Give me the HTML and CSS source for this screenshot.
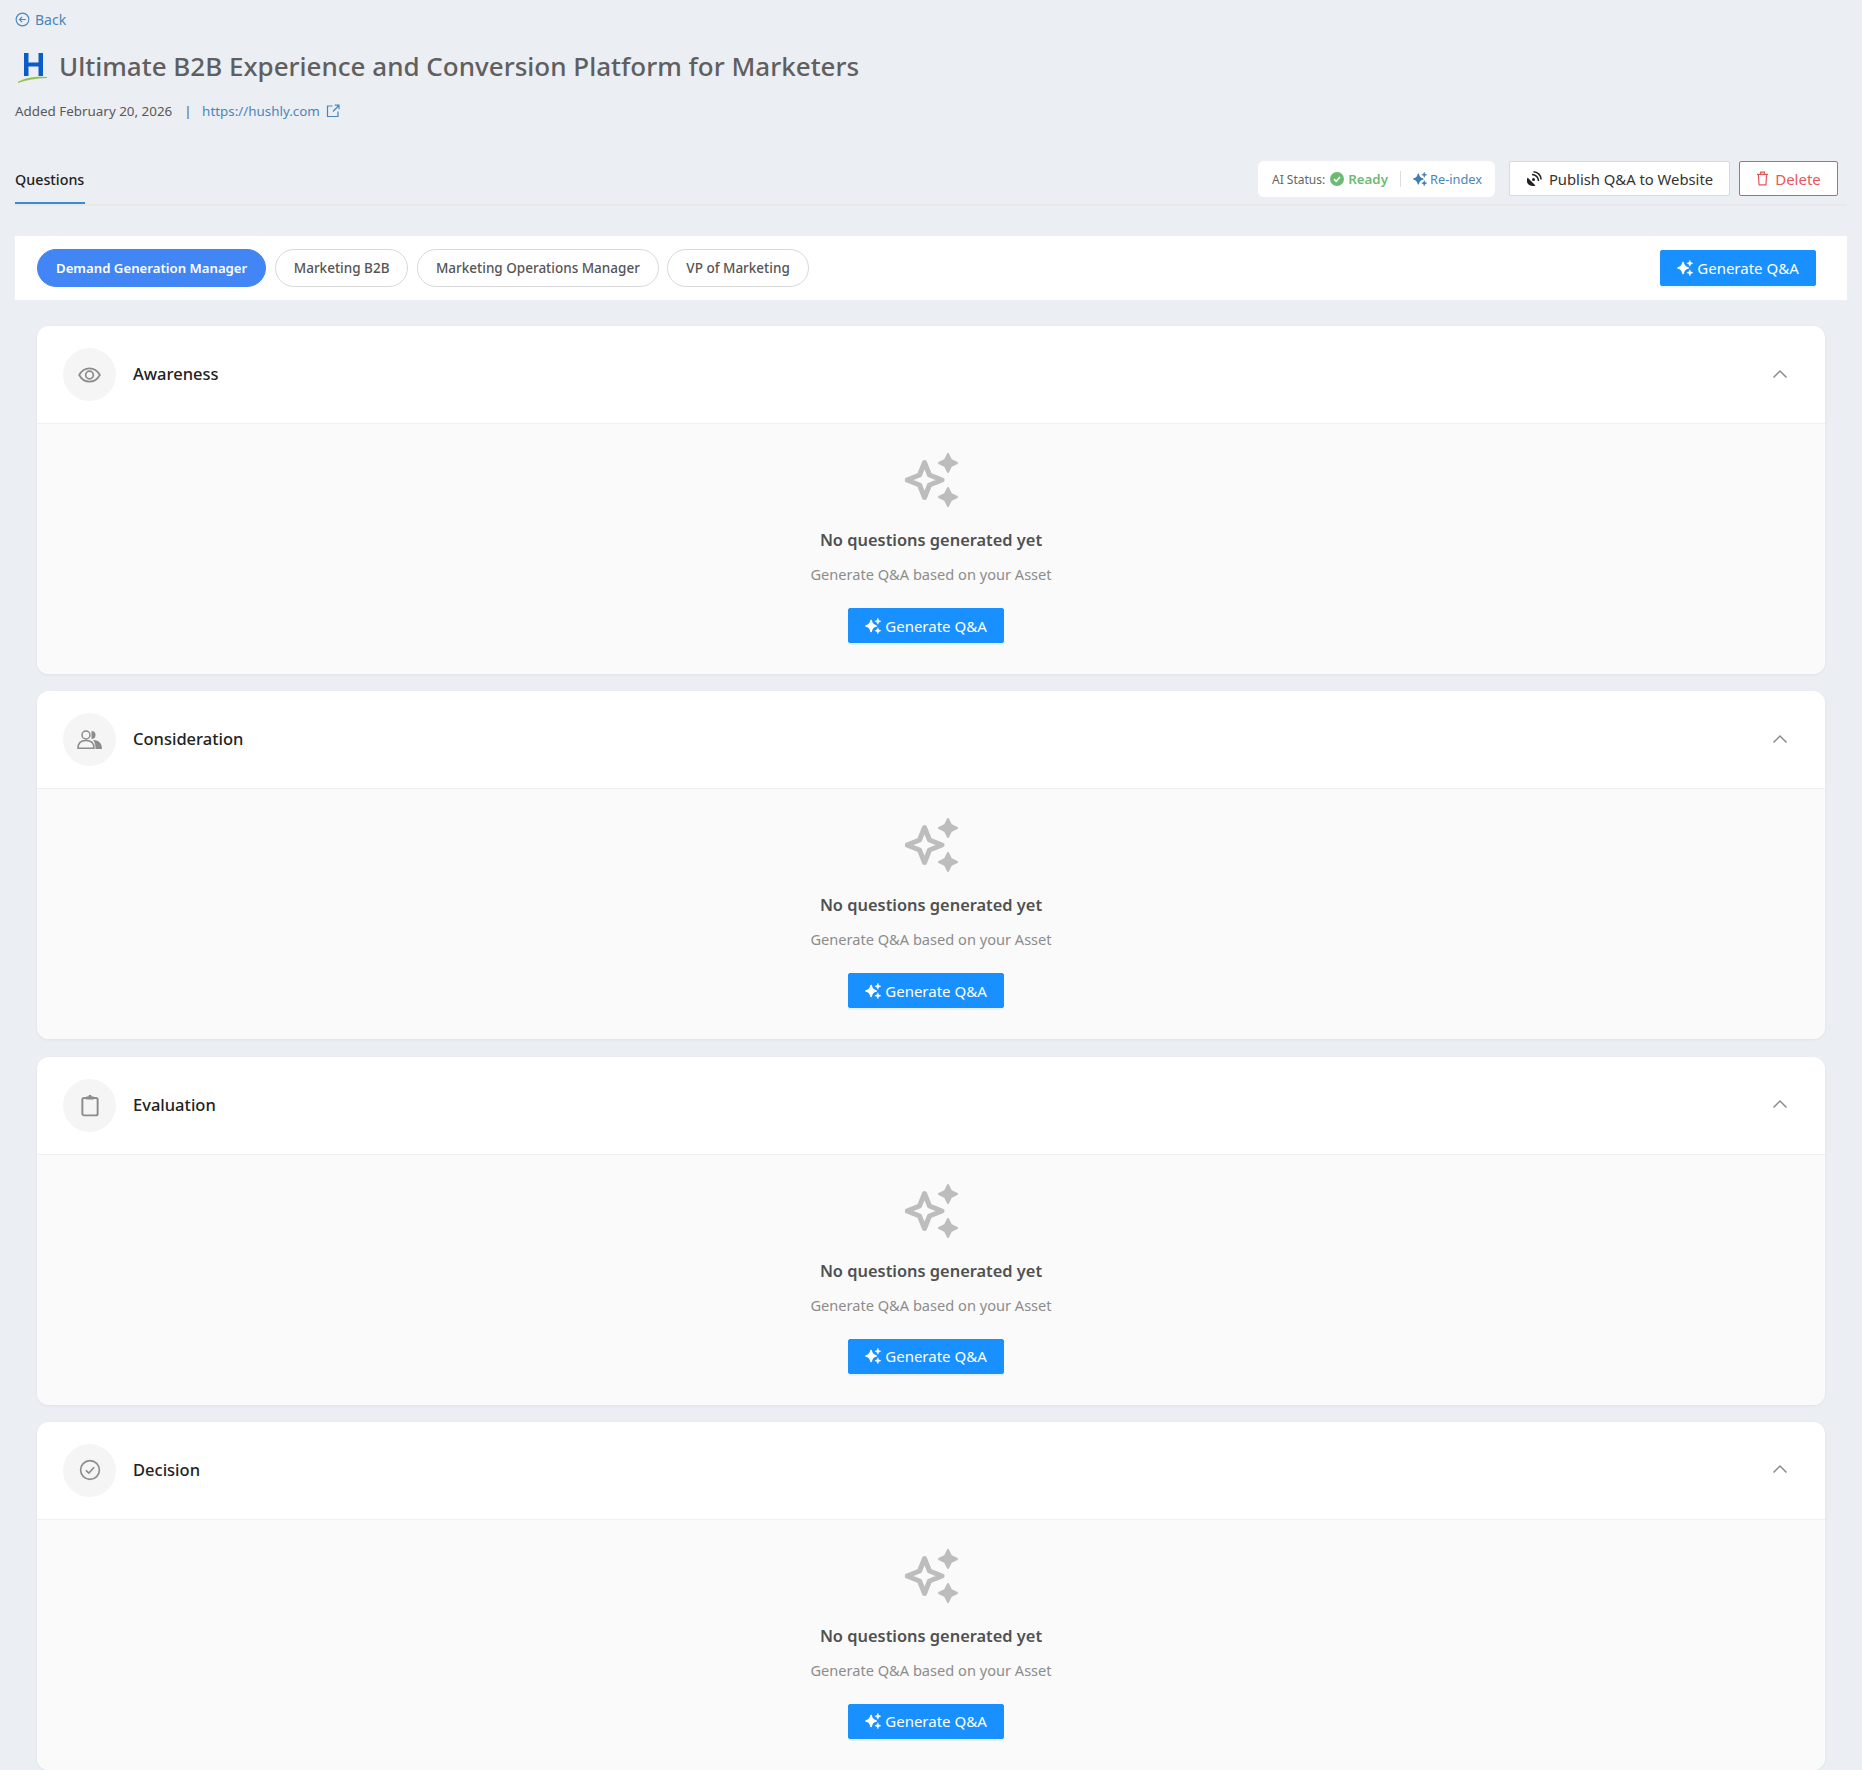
FILE: index.html
```html
<!DOCTYPE html>
<html lang="en">
<head>
<meta charset="utf-8">
<title>Questions</title>
<link rel="stylesheet" href="styles.css">
</head>
<body>
<svg class="defs" width="0" height="0" aria-hidden="true">
  <symbol id="spark-mini" viewBox="0 0 53 54">
    <path d="M20 9C21.500 19 26 24.500 37 27C26 29.500 21.500 35 20 45C18.500 35 14 29.500 3 27C14 24.500 18.500 19 20 9Z" stroke="currentColor" stroke-width="6" stroke-linejoin="round"/>
    <path d="M43 1C44 7 47 10 53 11C47 12 44 15 43 21C42 15 39 12 33 11C39 10 42 7 43 1Z" stroke="currentColor" stroke-width="2" stroke-linejoin="round"/>
    <path d="M43 33C44 39 47 42 53 43C47 44 44 47 43 53C42 47 39 44 33 43C39 42 42 39 43 33Z" stroke="currentColor" stroke-width="2" stroke-linejoin="round"/>
  </symbol>
  <symbol id="spark-big" viewBox="0 0 53 54">
    <path d="M19.500 9.500L24.500 22L37 27L24.500 32L19.500 44.500L14.500 32L2 27L14.500 22Z" fill="none" stroke="currentColor" stroke-width="5" stroke-linejoin="round"/>
    <path d="M43 1L46 7L52 10L46 13L43 19L40 13L34 10L40 7Z" stroke="currentColor" stroke-width="2" stroke-linejoin="round"/>
    <path d="M43 35L46 41L52 44L46 47L43 53L40 47L34 44L40 41Z" stroke="currentColor" stroke-width="2" stroke-linejoin="round"/>
  </symbol>
  <symbol id="chev" viewBox="0 0 16 10">
    <path d="M1.500 8.500L8 2L14.500 8.500" fill="none" stroke="currentColor" stroke-width="1.500"/>
  </symbol>
</svg>
<div class="page">
  <a class="back" href="#">
    <svg class="back-icon" viewBox="0 0 16 16" fill="none" stroke="currentColor" stroke-width="1.2"><circle cx="8" cy="8" r="6.8"/><path d="M11.5 8H5M7.6 5.2L4.8 8L7.6 10.8"/></svg>
    <span>Back</span>
  </a>
  <div class="title-row">
    <svg class="logo" viewBox="0 0 30 34">
      <path d="M7 4H11.500V13.500H21.500V4H26V27H21.500V17.500H11.500V27H7Z" fill="#0b5cc7"/>
      <path d="M1 33.500C8 29 19 27.500 30 28.500C19 29 9 30.500 1 33.500Z" fill="#86c03a" stroke="#86c03a" stroke-width="0.8"/>
    </svg>
    <h1 class="title">Ultimate B2B Experience and Conversion Platform for Marketers</h1>
  </div>
  <div class="meta">
    <span>Added February 20, 2026</span>
    <span class="sep">|</span>
    <a class="site" href="#">https://hushly.com</a>
    <svg class="ext" viewBox="0 0 14 14" fill="none" stroke="currentColor" stroke-width="1.2"><path d="M6.500 2H1.500V12.500H12V7.500M7 7.500L12.800 1.500M8.800 1.200H13V5.200"/></svg>
  </div>
  <div class="tabs">
    <div class="tab">Questions</div>
    <div class="actions">
      <div class="status">
        <span class="status-label">AI Status:</span>
        <svg class="ok" viewBox="0 0 14 14"><circle cx="7" cy="7" r="7" fill="#6dbb73"/><path d="M4 7.200L6.200 9.300L10 5" fill="none" stroke="#fff" stroke-width="1.600"/></svg>
        <span class="ready">Ready</span>
        <span class="status-sep"></span>
        <svg class="reindex-icon"><use href="#spark-mini"/></svg>
        <a class="reindex" href="#">Re-index</a>
      </div>
      <button class="btn btn-plain" type="button">
        <svg class="pub" viewBox="0 0 16 16"><path d="M1.500 6.500L9.500 14.500C7 15.500 4 15 2.300 13.300C0.800 11.700 0.500 8.800 1.500 6.500Z" fill="#222"/><path d="M6 3.500A6.500 6.500 0 0 1 12.500 10M7.500 0.800A8 8 0 0 1 15.200 8.500" fill="none" stroke="#222" stroke-width="1.500"/><circle cx="7.500" cy="8.500" r="1.500" fill="#222"/></svg>
        Publish Q&amp;A to Website
      </button>
      <button class="btn btn-danger" type="button">
        <svg class="trash" viewBox="0 0 14 16" fill="none" stroke="currentColor" stroke-width="1.300"><path d="M1 3.500H13M5 3.500V1.200H9V3.500M2.500 3.500L3.300 14.800H10.700L11.500 3.500"/></svg>
        Delete
      </button>
    </div>
  </div>
  <div class="personas">
    <div class="pills">
      <button class="pill pill-active" type="button">Demand Generation Manager</button>
      <button class="pill" type="button">Marketing B2B</button>
      <button class="pill" type="button">Marketing Operations Manager</button>
      <button class="pill" type="button">VP of Marketing</button>
    </div>
    <button class="btn btn-primary" type="button"><svg class="btn-spark"><use href="#spark-mini"/></svg>Generate Q&amp;A</button>
  </div>
  <div class="stages">
    <section class="card">
      <header class="card-head">
        <div class="stage-icon"><svg class="ico-eye" viewBox="0 0 24 16" fill="none" stroke="currentColor" stroke-width="1.800"><path d="M1.200 8C4 3 7.600 1 12 1S20 3 22.800 8C20 13 16.400 15 12 15S4 13 1.200 8Z"/><circle cx="12" cy="8" r="4"/></svg></div>
        <h2 class="stage-name">Awareness</h2>
        <svg class="chev"><use href="#chev"/></svg>
      </header>
      <div class="empty">
        <svg class="empty-icon"><use href="#spark-big"/></svg>
        <h3 class="empty-title">No questions generated yet</h3>
        <p class="empty-text">Generate Q&amp;A based on your Asset</p>
        <button class="btn btn-primary btn-center" type="button"><svg class="btn-spark"><use href="#spark-mini"/></svg>Generate Q&amp;A</button>
      </div>
    </section>
    <section class="card">
      <header class="card-head">
        <div class="stage-icon"><svg class="ico-people" viewBox="0 0 25 19" fill="none" stroke="currentColor" stroke-width="1.500"><circle cx="9" cy="5" r="4"/><path d="M1 18.200C1 13 4 10.500 9 10.500S17 13 17 18.200Z"/><path d="M14.500 1A4 4 0 0 1 14.500 9Z" fill="currentColor" stroke="none"/><path d="M16 10C21.500 10 25 13 25 19H18.500C18.500 15 18 12.500 16 10Z" fill="currentColor" stroke="none"/></svg></div>
        <h2 class="stage-name">Consideration</h2>
        <svg class="chev"><use href="#chev"/></svg>
      </header>
      <div class="empty">
        <svg class="empty-icon"><use href="#spark-big"/></svg>
        <h3 class="empty-title">No questions generated yet</h3>
        <p class="empty-text">Generate Q&amp;A based on your Asset</p>
        <button class="btn btn-primary btn-center" type="button"><svg class="btn-spark"><use href="#spark-mini"/></svg>Generate Q&amp;A</button>
      </div>
    </section>
    <section class="card">
      <header class="card-head">
        <div class="stage-icon"><svg viewBox="0 0 22 22" fill="none" stroke="currentColor" stroke-width="1.800"><rect x="4" y="4.500" width="14" height="16" rx="1.500"/><path d="M7.500 6V3.200H9.500A1.500 1.500 0 0 1 12.500 3.200H14.500V6Z" fill="currentColor" stroke="none"/></svg></div>
        <h2 class="stage-name">Evaluation</h2>
        <svg class="chev"><use href="#chev"/></svg>
      </header>
      <div class="empty">
        <svg class="empty-icon"><use href="#spark-big"/></svg>
        <h3 class="empty-title">No questions generated yet</h3>
        <p class="empty-text">Generate Q&amp;A based on your Asset</p>
        <button class="btn btn-primary btn-center" type="button"><svg class="btn-spark"><use href="#spark-mini"/></svg>Generate Q&amp;A</button>
      </div>
    </section>
    <section class="card">
      <header class="card-head">
        <div class="stage-icon"><svg viewBox="0 0 22 22" fill="none" stroke="currentColor" stroke-width="1.500"><circle cx="11" cy="11" r="8.600"/><path d="M7.200 11.300L10 13.800L14.800 8.500"/></svg></div>
        <h2 class="stage-name">Decision</h2>
        <svg class="chev"><use href="#chev"/></svg>
      </header>
      <div class="empty">
        <svg class="empty-icon"><use href="#spark-big"/></svg>
        <h3 class="empty-title">No questions generated yet</h3>
        <p class="empty-text">Generate Q&amp;A based on your Asset</p>
        <button class="btn btn-primary btn-center" type="button"><svg class="btn-spark"><use href="#spark-mini"/></svg>Generate Q&amp;A</button>
      </div>
    </section>
  </div>
</div>
</body>
</html>
```
FILE: styles.css
```css
* { box-sizing: border-box; }
html, body { margin: 0; padding: 0; }
body {
  background: #ebeef3;
  font-family: "Noto Sans", "Open Sans", sans-serif;
  color: #333;
  height: 1770px;
  overflow: hidden;
}
.defs { position: absolute; }
a { text-decoration: none; }
button { font-family: inherit; cursor: pointer; }
.page { padding: 0 15px; }

.back {
  display: flex;
  align-items: center;
  gap: 5px;
  height: 38px;
  color: #4a86b8;
  font-size: 14px;
}
.back-icon { width: 15px; height: 15px; }

.title-row { display: flex; align-items: center; height: 56px; }
.logo { width: 30px; height: 34px; margin: 0 12px 0 2px; }
.title {
  margin: 0;
  font-size: 26px;
  font-weight: 500;
  line-height: 56px;
  color: #5f5f5f;
}

.meta {
  display: flex;
  align-items: center;
  height: 34px;
  font-size: 13.4px;
  color: #595959;
}
.sep { margin: 0 10.5px 0 12px; }
.site { color: #4a86b8; }
.ext { width: 14px; height: 14px; margin-left: 6px; color: #4a86b8; }

.tabs {
  display: flex;
  justify-content: space-between;
  align-items: flex-start;
  margin-top: 33px;
  height: 45px;
  border-bottom: 2px solid #e8e8e8;
}
.tab {
  width: 70px;
  height: 43px;
  padding-top: 9px;
  border-bottom: 2px solid #3b8bd4;
  font-size: 14.3px;
  font-weight: 500;
  color: #222;
  white-space: nowrap;
}
.actions { display: flex; align-items: flex-start; gap: 9px; padding-right: 9px; }
.status {
  display: flex;
  align-items: center;
  width: 237px;
  height: 36px;
  margin-right: 5px;
  padding: 0 12px 0 14px;
  border-radius: 6px;
  background: #fff;
  font-size: 12px;
  color: #666;
}
.status-label { margin-right: 5px; }
.ok { width: 14px; height: 14px; margin-right: 4px; }
.ready { color: #6dbb73; font-weight: 600; font-size: 13.3px; }
.status-sep { width: 1px; height: 16px; margin: 0 12px; background: #ddd; }
.reindex-icon { width: 14px; height: 14px; margin-right: 3px; color: #3f7fb5; fill: currentColor; }
.reindex { color: #4a86b8; font-size: 12.8px; }

.btn {
  display: inline-flex;
  align-items: center;
  justify-content: center;
  height: 35px;
  padding: 0;
  border-radius: 2px;
  font-size: 15px;
  white-space: nowrap;
}
.btn-plain { width: 221px; gap: 7px; border: 1px solid #d9d9d9; background: #fff; color: #333; font-size: 14.8px; }
.pub { width: 16px; height: 16px; }
.btn-danger { width: 99px; gap: 6px; border: 1px solid #e4585c; background: #fff; color: #e4585c; }
.trash { width: 13px; height: 15px; }
.btn-primary { width: 156px; gap: 4px; border: 1px solid #1890ff; background: #1890ff; color: #fff; box-shadow: 0 2px 0 rgba(5,145,255,.08); }
.btn-spark { width: 16px; height: 16px; color: #fff; fill: currentColor; }

.personas {
  display: flex;
  justify-content: space-between;
  align-items: center;
  height: 64px;
  margin-top: 30px;
  padding: 0 31px 0 22px;
  background: #fff;
}
.personas .btn-primary { height: 36px; }
.pills { display: flex; gap: 8.5px; }
.pill {
  height: 38px;
  padding: 0 18px;
  border: 1px solid #d9d9d9;
  border-radius: 19px;
  background: #fff;
  font-size: 13.5px;
  font-weight: 500;
  color: #555;
  white-space: nowrap;
}
.pill-active { border-color: #4285f4; background: #4285f4; color: #fff; font-weight: 600; font-size: 13.2px; }

.stages { display: flex; flex-direction: column; gap: 17.3px; margin: 26px 22px 0; }
.card {
  flex: none;
  height: 348px;
  border-radius: 12px;
  background: #fff;
  box-shadow: 0 1px 3px rgba(0,0,0,.06);
  overflow: hidden;
}
.card-head {
  display: flex;
  align-items: center;
  height: 98px;
  padding: 0 37px 0 26px;
  border-bottom: 1px solid #f0f0f0;
}
.stage-icon {
  display: flex;
  align-items: center;
  justify-content: center;
  width: 53px;
  height: 53px;
  border-radius: 50%;
  background: #f5f5f5;
  color: #8c8c8c;
}
.stage-icon svg { width: 24px; height: 24px; }
.stage-icon .ico-eye { width: 23px; height: 16px; }
.stage-icon .ico-people { width: 25px; height: 19px; }
.stage-name {
  flex: 1;
  margin: 0 0 2px 17px;
  font-size: 16.5px;
  font-weight: 500;
  color: #222;
}
.chev { width: 16px; height: 10px; margin-bottom: 2px; color: #8c8c8c; }

.empty {
  display: flex;
  flex-direction: column;
  align-items: center;
  height: 250px;
  padding-top: 29px;
  background: #fafafa;
}
.empty-icon { width: 53px; height: 54px; color: #bdbdbd; fill: currentColor; }
.empty-title {
  margin: 20px 0 0;
  font-size: 16.4px;
  font-weight: 600;
  line-height: 26px;
  color: #505050;
}
.empty-text {
  margin: 8px 0 0;
  font-size: 14.6px;
  line-height: 26px;
  color: #8c8c8c;
}
.btn-center { margin: 21px 10px 0 0; }
```
